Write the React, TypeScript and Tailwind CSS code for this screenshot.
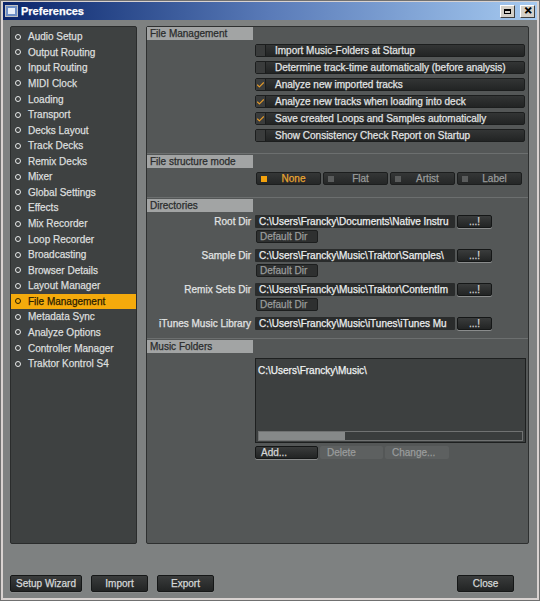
import { Check } from "lucide-react";

const menu = [
  "Audio Setup",
  "Output Routing",
  "Input Routing",
  "MIDI Clock",
  "Loading",
  "Transport",
  "Decks Layout",
  "Track Decks",
  "Remix Decks",
  "Mixer",
  "Global Settings",
  "Effects",
  "Mix Recorder",
  "Loop Recorder",
  "Broadcasting",
  "Browser Details",
  "Layout Manager",
  "File Management",
  "Metadata Sync",
  "Analyze Options",
  "Controller Manager",
  "Traktor Kontrol S4",
];

const checks = [
  { label: "Import Music-Folders at Startup", on: false },
  { label: "Determine track-time automatically (before analysis)", on: false },
  { label: "Analyze new imported tracks", on: true },
  { label: "Analyze new tracks when loading into deck", on: true },
  { label: "Save created Loops and Samples automatically", on: true },
  { label: "Show Consistency Check Report on Startup", on: false },
];

// paths are shown clipped, as the field does in the app
const dirs = [
  { label: "Root Dir", path: "C:\\Users\\Francky\\Documents\\Native Instru", def: true },
  { label: "Sample Dir", path: "C:\\Users\\Francky\\Music\\Traktor\\Samples\\", def: true },
  { label: "Remix Sets Dir", path: "C:\\Users\\Francky\\Music\\Traktor\\ContentIm", def: true },
  { label: "iTunes Music Library", path: "C:\\Users\\Francky\\Music\\iTunes\\iTunes Mu", def: false },
];

function Header({ title }: { title: string }) {
  return (
    <div className="h-[13px] w-[106px] bg-[#a2a4a4] pl-[3px] text-[10px] leading-[13px] text-[#2a2c2c]">
      {title}
    </div>
  );
}

function DarkButton({ children, className = "" }: { children: React.ReactNode; className?: string }) {
  return (
    <div
      className={`flex items-center justify-center rounded-[2px] border border-[#151717] bg-gradient-to-b from-[#3a3c3c] to-[#222424] text-[10px] text-[#d6d8d8] shadow-[0_1px_0_#8a8c8c] ${className}`}
    >
      {children}
    </div>
  );
}

export default function App() {
  return (
    <div
      className="flex h-[601px] w-[540px] flex-col border border-[#707070] bg-[#d8d2d0] px-[2px] pb-[2px] pt-[1px] [-webkit-text-stroke:0.25px]"
      style={{ fontFamily: '"Liberation Sans", Arial, sans-serif' }}
    >
      {/* title bar */}
      <div className="flex h-[18px] items-center bg-gradient-to-r from-[#0a246a] via-[#5a7bb8] to-[#a6caf0] pl-[2px] pr-[2px]">
        <div className="flex h-[12px] w-[13px] items-center justify-center border border-[#c0c0c0] bg-[#6e8fc6]">
          <div className="h-[6px] w-[7px] bg-[#e8eef8]" />
        </div>
        <span className="ml-[3px] text-[11px] font-bold text-white">Preferences</span>
        <div className="ml-auto flex items-center gap-[5px]">
          <div className="flex h-[13px] w-[15px] items-center justify-center border border-b-[#404040] border-l-white border-r-[#404040] border-t-white bg-[#d4d0c8]">
            <div className="h-[5px] w-[7px] border border-black border-t-2 bg-[#d4d0c8]" />
          </div>
          <div className="flex h-[13px] w-[15px] items-center justify-center border border-b-[#404040] border-l-white border-r-[#404040] border-t-white bg-[#d4d0c8] text-[10px] font-bold leading-none text-black">
            ✕
          </div>
        </div>
      </div>

      {/* body */}
      <div className="flex flex-1 flex-col bg-[#7e8181] pl-[7px] pr-[6px] pt-[6px]">
        <div className="flex h-[518px] gap-[9px]">
          {/* sidebar */}
          <div className="w-[127px] rounded-[2px] border border-[#2a2c2c] bg-[#3e4141] pt-[2px]">
            {menu.map((m) => {
              const sel = m === "File Management";
              return (
                <div
                  key={m}
                  className={`flex h-[15.57px] items-center pl-[4px] text-[10px] ${sel ? "bg-[#f4aa0c] text-[#2a2000]" : "text-[#dcdede]"}`}
                >
                  <span
                    className={`mr-[7px] h-[6px] w-[6px] rounded-full border-[1.5px] ${sel ? "border-[#2a2000]" : "border-[#e8eaea]"}`}
                  />
                  {m}
                </div>
              );
            })}
          </div>

          {/* content */}
          <div className="flex w-[383px] flex-col rounded-[2px] border border-[#2e3030] bg-[#545757] text-[10px] text-[#e2e4e4]">
            {/* File Management */}
            <div className="h-[126px]">
              <Header title="File Management" />
              <div className="mt-[4px] flex flex-col gap-[4px] pl-[108px]">
                {checks.map((c) => (
                  <div
                    key={c.label}
                    className="flex h-[13px] w-[270px] items-center rounded-[2px] border border-[#1c1e1e] bg-gradient-to-b from-[#333535] to-[#222424]"
                  >
                    <div className="flex h-[11px] w-[10px] items-center justify-center border-r border-[#1a1c1c] bg-[#3a3c3c]">
                      {c.on && <Check size={10} strokeWidth={3} className="text-[#e39a2a]" />}
                    </div>
                    <span className="ml-[9px] leading-[13px]">{c.label}</span>
                  </div>
                ))}
              </div>
            </div>

            {/* File structure mode */}
            <div className="h-[44px] border-t border-[#6c6f6f]">
              <div className="mt-[1px]">
                <Header title="File structure mode" />
              </div>
              <div className="mt-[4px] flex gap-[2px] pl-[109px]">
                {["None", "Flat", "Artist", "Label"].map((r, i) => (
                  <div
                    key={r}
                    className="flex h-[13px] w-[65px] items-center rounded-[2px] border border-[#1c1e1e] bg-gradient-to-b from-[#353737] to-[#252727]"
                  >
                    <div className={`ml-[4px] h-[6px] w-[6px] ${i === 0 ? "bg-[#f4a20c]" : "bg-[#5a5c5c]"}`} />
                    <span className={`flex-1 text-center ${i === 0 ? "text-[#e8a530]" : "text-[#9a9c9c]"}`}>{r}</span>
                  </div>
                ))}
              </div>
            </div>

            {/* Directories */}
            <div className="h-[141px] border-t border-[#6c6f6f]">
              <div className="mt-[1px]">
                <Header title="Directories" />
              </div>
              <div className="mt-[3px] flex flex-col">
                {dirs.map((d) => (
                  <div key={d.label} className="mb-[6px] flex flex-col">
                    <div className="flex h-[13px] items-center">
                      <div className="w-[104px] text-right">{d.label}</div>
                      <div className="ml-[4px] h-[13px] w-[200px] whitespace-nowrap rounded-[1px] bg-[#2a2c2c] pl-[4px] leading-[13px] text-[#eceeee]">
                        {d.path}
                      </div>
                      <DarkButton className="ml-[2px] h-[13px] w-[35px] text-[#aeb0b0]">...!</DarkButton>
                    </div>
                    {d.def && (
                      <div className="mt-[2px] pl-[109px]">
                        <div className="flex h-[13px] w-[62px] items-center rounded-[2px] border border-[#1c1e1e] bg-[#2e3030] pl-[3px] text-[#9a9c9c]">
                          Default Dir
                        </div>
                      </div>
                    )}
                  </div>
                ))}
              </div>
            </div>

            {/* Music Folders */}
            <div className="flex-1 border-t border-[#6c6f6f]">
              <div className="mt-[1px]">
                <Header title="Music Folders" />
              </div>
              <div className="ml-[108px] mt-[5px] flex h-[85px] w-[271px] flex-col border border-[#1e2020] bg-[#3d4040]">
                <div className="pl-[2px] pt-[4px] text-[#f0f2f2]">C:\Users\Francky\Music\</div>
                <div className="mx-[2px] mb-[1px] mt-auto h-[10px] border border-[#707272] bg-[#3a3d3d]">
                  <div className="h-full w-[86px] bg-[#868989]" />
                </div>
              </div>
              <div className="ml-[108px] mt-[3px] flex gap-[2px]">
                <DarkButton className="h-[13px] w-[63px] !justify-start pl-[5px]">Add...</DarkButton>
                <div className="flex h-[13px] w-[63px] items-center rounded-[2px] bg-[#5d6060] pl-[7px] text-[#9a9c9c]">Delete</div>
                <div className="flex h-[13px] w-[64px] items-center rounded-[2px] bg-[#5d6060] pl-[7px] text-[#9a9c9c]">Change...</div>
              </div>
            </div>
          </div>
        </div>

        {/* bottom buttons */}
        <div className="mt-[31px] flex h-[17px] items-center">
          <DarkButton className="h-[17px] w-[72px]">Setup Wizard</DarkButton>
          <DarkButton className="ml-[9px] h-[17px] w-[57px]">Import</DarkButton>
          <DarkButton className="ml-[9px] h-[17px] w-[57px]">Export</DarkButton>
          <DarkButton className="ml-auto mr-[17px] h-[17px] w-[57px]">Close</DarkButton>
        </div>
      </div>
    </div>
  );
}
